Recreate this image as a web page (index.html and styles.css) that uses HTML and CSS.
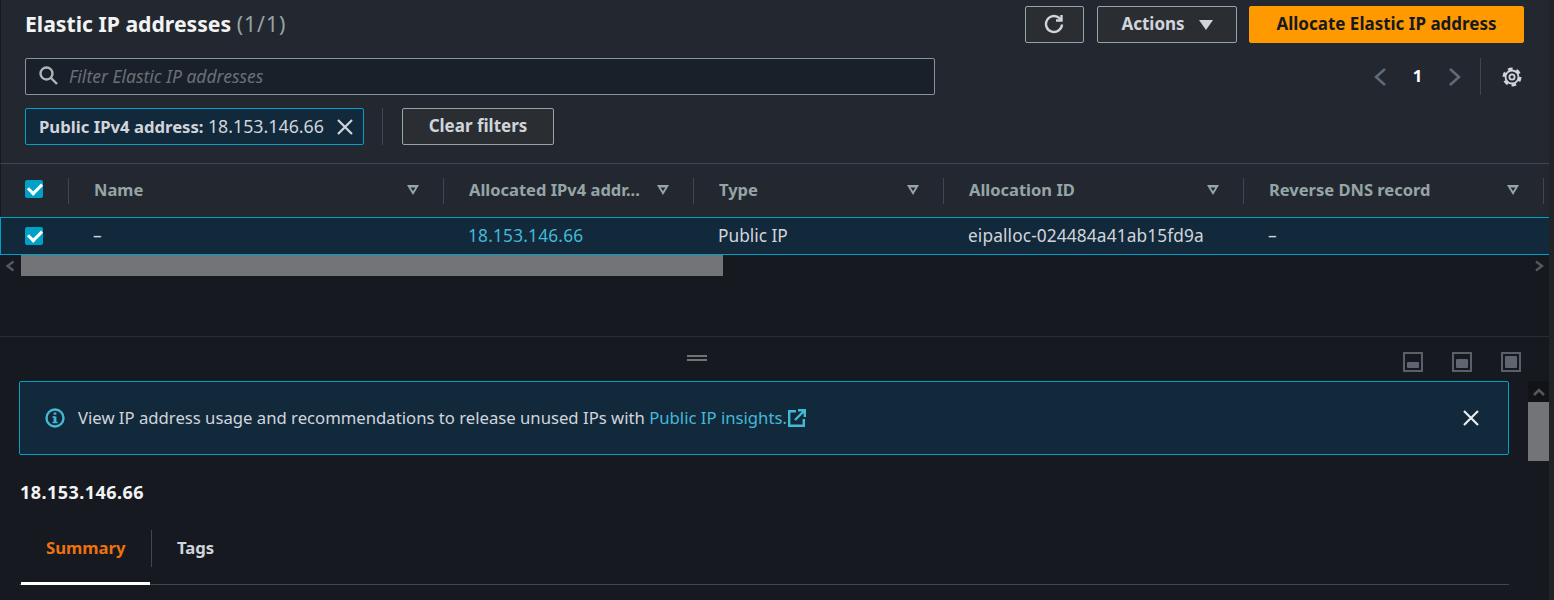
FILE: index.html
```html
<!DOCTYPE html>
<html lang="en">
<head>
    <meta charset="UTF-8">
    <title>Elastic IP addresses</title>
    <link rel="stylesheet" href="styles.css">
</head>
<body>
    <div class="page">
        <div class="top-panel">
            <div class="title-row">
                <h1>Elastic IP addresses <span class="count">(1/1)</span></h1>
                <div class="actions">
                    <button class="btn btn-icon" type="button">
                        <svg width="20" height="20" viewBox="0 0 20 20" fill="none" stroke="currentColor" stroke-width="2.4"><path d="M18 10.500a8 8 0 1 1-2.500-6.300L17 6"/><path d="M17.500 1v5.500H12"/></svg>
                    </button>
                    <button class="btn btn-actions" type="button">Actions <span class="caret"></span></button>
                    <button class="btn btn-primary" type="button">Allocate Elastic IP address</button>
                </div>
            </div>
            <div class="filter-row">
                <div class="search">
                    <svg width="19" height="19" viewBox="0 0 19 19" fill="none" stroke="#aab7b8" stroke-width="2.4"><circle cx="7.500" cy="7.500" r="6"/><path d="M12 12l6 6"/></svg>
                    <span>Filter Elastic IP addresses</span>
                </div>
                <div class="pager">
                    <svg width="14" height="20" viewBox="0 0 14 20" fill="none" stroke="#5f6b7a" stroke-width="2.500"><path d="M12 2L3 10l9 8"/></svg>
                    <span class="page-num">1</span>
                    <svg width="14" height="20" viewBox="0 0 14 20" fill="none" stroke="#5f6b7a" stroke-width="2.500"><path d="M2 2l9 8-9 8"/></svg>
                    <span class="pager-sep"></span>
                    <svg width="20" height="20" viewBox="0 0 20 20" fill="none" stroke="#d1d5db"><circle cx="10" cy="10" r="8" stroke-width="3" stroke-dasharray="4.500 3.880"/><circle cx="10" cy="10" r="6.500" stroke-width="1.800"/><circle cx="10" cy="10" r="2.600" stroke-width="1.800"/></svg>
                </div>
            </div>
            <div class="chip-row">
                <div class="chip">
                    <span><b>Public IPv4 address:</b> <span class="chip-value">18.153.146.66</span></span>
                    <svg width="18" height="18" viewBox="0 0 18 18" fill="none" stroke="#d1d5db" stroke-width="2.200"><path d="M2 2l14 14M16 2L2 16"/></svg>
                </div>
                <span class="chip-sep"></span>
                <button class="btn btn-clear" type="button">Clear filters</button>
            </div>
        </div>

        <div class="table-head">
            <div class="th th-check"><span class="checkbox"></span></div>
            <div class="th"><span>Name</span><svg class="sort" width="12" height="10" viewBox="0 0 12 10"><path d="M0 0h12L6 10zM3.600 2.400L6 6.200 8.400 2.400z" fill="#95a5a6" fill-rule="evenodd"/></svg></div>
            <div class="th"><span>Allocated IPv4 addr...</span><svg class="sort" width="12" height="10" viewBox="0 0 12 10"><path d="M0 0h12L6 10zM3.600 2.400L6 6.200 8.400 2.400z" fill="#95a5a6" fill-rule="evenodd"/></svg></div>
            <div class="th"><span>Type</span><svg class="sort" width="12" height="10" viewBox="0 0 12 10"><path d="M0 0h12L6 10zM3.600 2.400L6 6.200 8.400 2.400z" fill="#95a5a6" fill-rule="evenodd"/></svg></div>
            <div class="th"><span>Allocation ID</span><svg class="sort" width="12" height="10" viewBox="0 0 12 10"><path d="M0 0h12L6 10zM3.600 2.400L6 6.200 8.400 2.400z" fill="#95a5a6" fill-rule="evenodd"/></svg></div>
            <div class="th"><span>Reverse DNS record</span><svg class="sort" width="12" height="10" viewBox="0 0 12 10"><path d="M0 0h12L6 10zM3.600 2.400L6 6.200 8.400 2.400z" fill="#95a5a6" fill-rule="evenodd"/></svg></div>
        </div>
        <div class="table-row">
            <div class="td td-check"><span class="checkbox"></span></div>
            <div class="td">–</div>
            <div class="td link">18.153.146.66</div>
            <div class="td">Public IP</div>
            <div class="td td-id">eipalloc-024484a41ab15fd9a</div>
            <div class="td">–</div>
        </div>
        <div class="h-scroll">
            <svg width="21" height="21" viewBox="0 0 21 21" fill="none" stroke="#55585e" stroke-width="2.400"><path d="M13.500 6.500L7.500 11l6 4.500"/></svg>
            <div class="h-thumb"></div>
            <svg class="h-right" width="21" height="21" viewBox="0 0 21 21" fill="none" stroke="#55585e" stroke-width="2.400"><path d="M8 6.500l6 4.500-6 4.500"/></svg>
        </div>

        <div class="split">
            <div class="handle"></div>
            <div class="split-icons">
                <svg width="20" height="20" viewBox="0 0 20 20"><rect x="1" y="1" width="18" height="18" fill="none" stroke="#5a5f6a" stroke-width="2"/><rect x="4" y="10" width="12" height="6" rx="1" fill="#5f6570"/></svg>
                <svg width="20" height="20" viewBox="0 0 20 20"><rect x="1" y="1" width="18" height="18" fill="none" stroke="#5a5f6a" stroke-width="2"/><rect x="4" y="7" width="12" height="9" rx="1" fill="#5f6570"/></svg>
                <svg width="20" height="20" viewBox="0 0 20 20"><rect x="1" y="1" width="18" height="18" fill="none" stroke="#5a5f6a" stroke-width="2"/><rect x="4" y="4" width="12" height="12" rx="1" fill="#5f6570"/></svg>
            </div>
            <div class="split-body">
                <div class="split-content">
                    <div class="notice">
                        <svg width="20" height="20" viewBox="0 0 20 20" fill="none" stroke="#44b9d6" stroke-width="2.400"><circle cx="10" cy="10" r="8.500"/><path d="M10 8.500v6" stroke-width="2.800"/><path d="M7.500 14.500h5M7.500 9H10" stroke-width="1.600"/><path d="M10 4.500v2.200" stroke-width="2.800"/></svg>
                        <p>View IP address usage and recommendations to release unused IPs with <a>Public IP insights.</a><svg class="ext" width="18" height="18" viewBox="0 0 18 18" fill="none" stroke="#44b9d6" stroke-width="2.400"><path d="M8 2.200H1.200v14.600h14.600V10"/><path d="M7 11l9-9M10 1.200h6.800V8"/></svg></p>
                        <svg width="18" height="18" viewBox="0 0 18 18" fill="none" stroke="#e9ebed" stroke-width="2.200"><path d="M2 2l14 14M16 2L2 16"/></svg>
                    </div>
                    <h2>18.153.146.66</h2>
                    <div class="tabs">
                        <div class="tab tab-active">Summary</div>
                        <div class="tab">Tags</div>
                    </div>
                </div>
                <div class="v-scroll">
                    <div class="v-arrow">
                        <svg width="14" height="10" viewBox="0 0 14 10" fill="none" stroke="#55585e" stroke-width="2.500"><path d="M2 8l5-5 5 5"/></svg>
                    </div>
                    <div class="v-thumb"></div>
                </div>
            </div>
        </div>
    </div>
</body>
</html>
```

FILE: styles.css
```css
* {
    box-sizing: border-box;
}

html, body {
    height: 600px;
    overflow: hidden;
}

body {
    margin: 0;
    padding-right: 5px;
    background-color: #212328;
    color: #d1d5db;
    font-family: 'Noto Sans', 'Open Sans', sans-serif;
    font-size: 16.7px;
}

.page {
    height: 600px;
    background-color: #16191f;
}

.top-panel {
    height: 164px;
    background-color: #232830;
    border-left: 1px solid #16191f;
    border-bottom: 1px solid #414750;
    padding: 6px 25px 0 24px;
}

.title-row {
    display: flex;
    justify-content: space-between;
    height: 37px;
}

h1 {
    margin: 0;
    font-size: 21.2px;
    line-height: 35px;
    font-weight: 700;
    color: #f2f3f3;
}

.count {
    font-weight: 400;
    letter-spacing: 1px;
    color: #95a5a6;
}

.actions {
    display: flex;
    gap: 12px;
}

.btn {
    height: 37px;
    border: 1px solid #95a5a6;
    border-radius: 2px;
    background-color: #2a2e33;
    color: #d1d5db;
    font-family: inherit;
    font-size: 17px;
    font-weight: 700;
    padding: 0 0 2px;
    display: flex;
    align-items: center;
    justify-content: center;
}

.btn-icon {
    width: 59px;
    margin-right: 1px;
    padding-right: 2px;
}

.btn-actions {
    width: 140px;
    gap: 14px;
}

.caret {
    border-left: 7px solid transparent;
    border-right: 7px solid transparent;
    border-top: 10px solid #d1d5db;
    margin-top: 2px;
}

.btn-primary {
    width: 275px;
    background-color: #ff9900;
    border-color: #ff9900;
    color: #16191f;
}

.filter-row {
    display: flex;
    margin-top: 15px;
    height: 37px;
}

.search {
    width: 910px;
    height: 37px;
    display: flex;
    align-items: center;
    gap: 11px;
    padding: 0 0 2px 13px;
    background-color: #1a2029;
    border: 1px solid #879596;
    border-radius: 2px;
    font-size: 17.5px;
    font-style: italic;
    color: #687078;
}

.pager {
    flex: 1;
    display: flex;
    align-items: center;
    padding-left: 438px;
}

.page-num {
    width: 61px;
    padding-bottom: 2px;
    text-align: center;
    color: #fff;
    font-weight: 700;
}

.pager-sep {
    width: 1px;
    height: 37px;
    background-color: #414750;
    margin: 0 21px 0 18px;
}

.chip-row {
    display: flex;
    align-items: center;
    margin-top: 13px;
    height: 37px;
}

.chip {
    width: 339px;
    height: 37px;
    display: flex;
    align-items: center;
    justify-content: space-between;
    padding: 0 9px 2px 13px;
    background-color: #12293b;
    border: 1px solid #00a1c9;
    border-radius: 2px;
    font-size: 16.7px;
    white-space: nowrap;
}

.chip-value {
    font-size: 17.8px;
}

.chip svg {
    margin-top: 2px;
}

.chip-sep {
    width: 1px;
    height: 37px;
    background-color: #414750;
    margin: 0 19px 0 18px;
}

.btn-clear {
    width: 152px;
}

.table-head, .table-row {
    display: grid;
    grid-template-columns: 69px 375px 250px 250px 300px 305px;
}

.table-head {
    height: 53px;
    background-color: #232830;
    border-left: 1px solid #16191f;
    grid-template-columns: 68px 375px 250px 250px 300px 305px;
    align-items: center;
    font-size: 16.5px;
}

.th {
    height: 26px;
    display: flex;
    align-items: center;
    justify-content: space-between;
    padding: 0 24px 2px 25px;
    border-right: 1px solid #414750;
    font-weight: 700;
    color: #95a5a6;
    white-space: nowrap;
}

.th:last-child {
    width: 300px;
}

.th-check {
    padding: 0 0 0 24px;
}

.th-check .checkbox {
    margin-bottom: 3px;
}

.sort {
    margin-top: 1px;
}

.checkbox {
    position: relative;
    display: block;
    width: 18px;
    height: 18px;
    border-radius: 2px;
    background-color: #00a1c9;
}

.checkbox::after {
    content: "";
    position: absolute;
    left: 3px;
    top: 3px;
    width: 11px;
    height: 6px;
    border-left: 3px solid #fff;
    border-bottom: 3px solid #fff;
    transform: rotate(-45deg);
}

.table-row {
    height: 38px;
    align-items: center;
    background-color: #12293b;
    border-top: 1px solid #00a1c9;
    border-bottom: 1px solid #00a1c9;
    box-shadow: inset 1px 0 0 #00a1c9;
    font-size: 17.300px;
    white-space: nowrap;
}

.td {
    padding: 0 0 2px 24px;
}

.td-check {
    padding: 0 0 1px 25px;
}

.td-id {
    letter-spacing: 0.12px;
}

.link, .notice a {
    color: #44b9d6;
}

.link {
    letter-spacing: 0.2px;
}

.h-scroll {
    display: flex;
    height: 21px;
}

.h-thumb {
    width: 702px;
    background-color: #737477;
}

.h-right {
    margin-left: auto;
}

.split {
    position: relative;
    height: 264px;
    margin-top: 60px;
    border-top: 1px solid #2a2e33;
}

.handle {
    position: absolute;
    left: 687px;
    top: 18px;
    width: 20px;
    height: 6px;
    border-top: 2px solid #6f7277;
    border-bottom: 2px solid #6f7277;
}

.split-icons {
    display: flex;
    justify-content: flex-end;
    gap: 29px;
    height: 44px;
    padding: 15px 28px 0 0;
}

.split-body {
    display: flex;
}

.split-content {
    width: 1528px;
    padding: 0 19px;
}

.notice {
    height: 74px;
    display: flex;
    align-items: center;
    padding: 0 28px 0 25px;
    background-color: #12293b;
    border: 1px solid #00a1c9;
    border-radius: 2px;
    color: #d1d5db;
}

.notice p {
    margin: 0 0 2px 13px;
    flex: 1;
}

.ext {
    margin-left: 1px;
    vertical-align: -3px;
}

h2 {
    margin: 25px 0 0 1px;
    font-size: 18px;
    line-height: 24px;
    font-weight: 700;
    letter-spacing: 0.45px;
    color: #f2f3f3;
}

.tabs {
    display: flex;
    margin-top: 23px;
    height: 58px;
    border-bottom: 1px solid #414750;
    padding-top: 3px;
}

.tab {
    height: 37px;
    padding: 0 25px;
    line-height: 35px;
    font-weight: 700;
    color: #d1d5db;
}

.tab-active {
    position: relative;
    width: 133px;
    padding-left: 27px;
    color: #ec7211;
    border-right: 1px solid #414750;
}

.tab-active::after {
    content: "";
    position: absolute;
    left: 2px;
    bottom: -18px;
    width: 129px;
    height: 3px;
    background-color: #fff;
}

.v-scroll {
    width: 21px;
}

.v-arrow {
    height: 21px;
    background-color: #111317;
    display: flex;
    align-items: center;
    justify-content: center;
}

.v-thumb {
    height: 59px;
    background-color: #737477;
}
```
